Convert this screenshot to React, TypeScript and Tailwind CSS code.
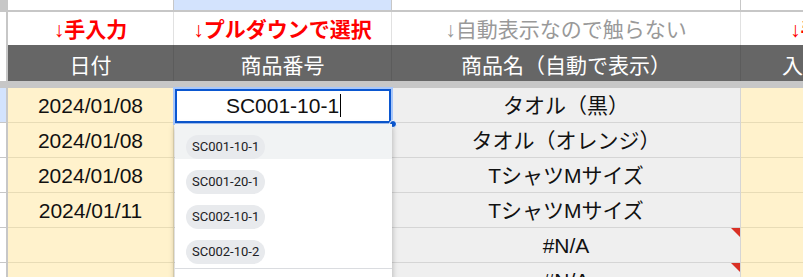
const font = "font-['Liberation_Sans','Noto_Sans_CJK_JP',sans-serif]";

const yellow = "bg-[#fff2cc] border-[#e8dcb6]";
const white = "bg-white border-[#e1e1e1]";
const gray = "bg-[#efefef] border-[#d5d5d5]";

const rows = [
  { date: "2024/01/08", code: "SC001-10-1", name: "タオル（黒）", err: false },
  { date: "2024/01/08", code: "", name: "タオル（オレンジ）", err: false },
  { date: "2024/01/08", code: "", name: "TシャツMサイズ", err: false },
  { date: "2024/01/11", code: "", name: "TシャツMサイズ", err: false },
  { date: "", code: "", name: "#N/A", err: true },
  { date: "", code: "", name: "#N/A", err: true },
];

const options = ["SC001-10-1", "SC001-20-1", "SC002-10-1", "SC002-10-2"];

function Arrow() {
  return <span className="font-normal">↓</span>;
}

export default function App() {
  return (
    <div className={`relative w-[803px] h-[277px] overflow-hidden bg-white text-[21px] leading-[24px] ${font}`}>
      {/* column letters row, cut off */}
      <div className="flex h-[12px] border-b-2 border-[#c7c7c7]">
        <div className="w-[8px] shrink-0 bg-[#c7c7c7]" />
        <div className="w-[166px] shrink-0 border-r border-[#c7c7c7] bg-white" />
        <div className="w-[218px] shrink-0 border-r border-[#c7c7c7] bg-[#d3e3fd]" />
        <div className="w-[349px] shrink-0 border-r border-[#c7c7c7] bg-white" />
        <div className="w-[171px] shrink-0 bg-white" />
      </div>

      {/* guide labels */}
      <div className="flex h-[33px] font-bold text-[#ff0000]">
        <div className="w-[6px] shrink-0 border-r-2 border-[#c7c7c7] box-content" />
        <div className={`w-[166px] shrink-0 border-r ${white} flex items-end justify-center pb-[3px]`}>
          <span><Arrow />手入力</span>
        </div>
        <div className={`w-[218px] shrink-0 border-r ${white} flex items-end justify-center pb-[3px]`}>
          <span><Arrow />プルダウンで選択</span>
        </div>
        <div className={`w-[349px] shrink-0 border-r ${white} flex items-end justify-center pb-[3px] font-normal text-[#999999]`}>
          <span><Arrow />自動表示なので触らない</span>
        </div>
        <div className="w-[171px] shrink-0 flex items-end pb-[3px] pl-[49px] whitespace-nowrap">
          <span><Arrow />手入力</span>
        </div>
      </div>

      {/* header */}
      <div className="flex h-[36px] text-white">
        <div className="w-[6px] shrink-0 border-r-2 border-[#c7c7c7] box-content bg-white" />
        <div className="w-[166px] shrink-0 border-r border-[#5c5c5c] bg-[#666666] flex items-end justify-center pb-[3px]">日付</div>
        <div className="w-[218px] shrink-0 border-r border-[#5c5c5c] bg-[#666666] flex items-end justify-center pb-[3px]">商品番号</div>
        <div className="w-[349px] shrink-0 border-r border-[#5c5c5c] bg-[#666666] flex items-end justify-center pb-[3px]">商品名（自動で表示）</div>
        <div className="w-[171px] shrink-0 bg-[#666666] flex items-end pb-[3px] pl-[41px] whitespace-nowrap">入荷数</div>
      </div>

      {/* frozen divider */}
      <div className="h-[7px] bg-[#c7c7c7]" />

      {rows.map((r, i) => (
        <div key={i} className="flex h-[35px] text-[#111111]">
          <div
            className={`w-[6px] shrink-0 border-r-2 border-b border-[#c7c7c7] box-content ${
              i === 0 ? "bg-[#d3e3fd]" : "bg-white"
            }`}
          />
          <div className={`w-[166px] shrink-0 border-r border-b ${yellow} flex items-end justify-center pb-[4px]`}>
            {r.date}
          </div>
          <div className={`w-[218px] shrink-0 border-r border-b ${white} flex items-end justify-center pb-[4px]`}>
            {r.code && (
              <span className="relative">
                {r.code}
                <span className="absolute -right-[2px] top-[0px] h-[23px] w-px bg-black" />
              </span>
            )}
          </div>
          <div className={`relative w-[349px] shrink-0 border-r border-b ${gray} flex items-end justify-center pb-[4px]`}>
            {r.name}
            {r.err && (
              <span className="absolute top-0 right-0 h-0 w-0 border-t-[9px] border-l-[9px] border-t-[#d93025] border-l-transparent" />
            )}
          </div>
          <div className={`w-[171px] shrink-0 border-b ${yellow}`} />
        </div>
      ))}

      {/* active cell outline */}
      <div className="absolute left-[175px] top-[89px] h-[34px] w-[216px] border-2 border-[#0b57d0] ring-2 ring-[#a8c7fa]" />
      <div className="absolute left-[389px] top-[120px] h-[8px] w-[8px] rounded-full border border-white bg-[#0b57d0]" />

      {/* data validation dropdown */}
      <div className="absolute left-[175px] top-[124px] w-[217px] bg-white shadow-[0_2px_6px_rgba(0,0,0,0.28)] font-['Roboto',sans-serif]">
        {options.map((o, i) => (
          <div key={o} className={`h-[35px] pl-[11px] pt-[8px] ${i === 0 ? "bg-[#f1f3f4]" : ""}`}>
            <span className="inline-flex h-[24px] items-center rounded-full bg-[#e8eaed] px-[6px] text-[13px] leading-none text-[#202124]">
              {o}
            </span>
          </div>
        ))}
        <div className="mt-[4px] h-[40px] border-t border-[#dadce0]" />
      </div>
    </div>
  );
}
